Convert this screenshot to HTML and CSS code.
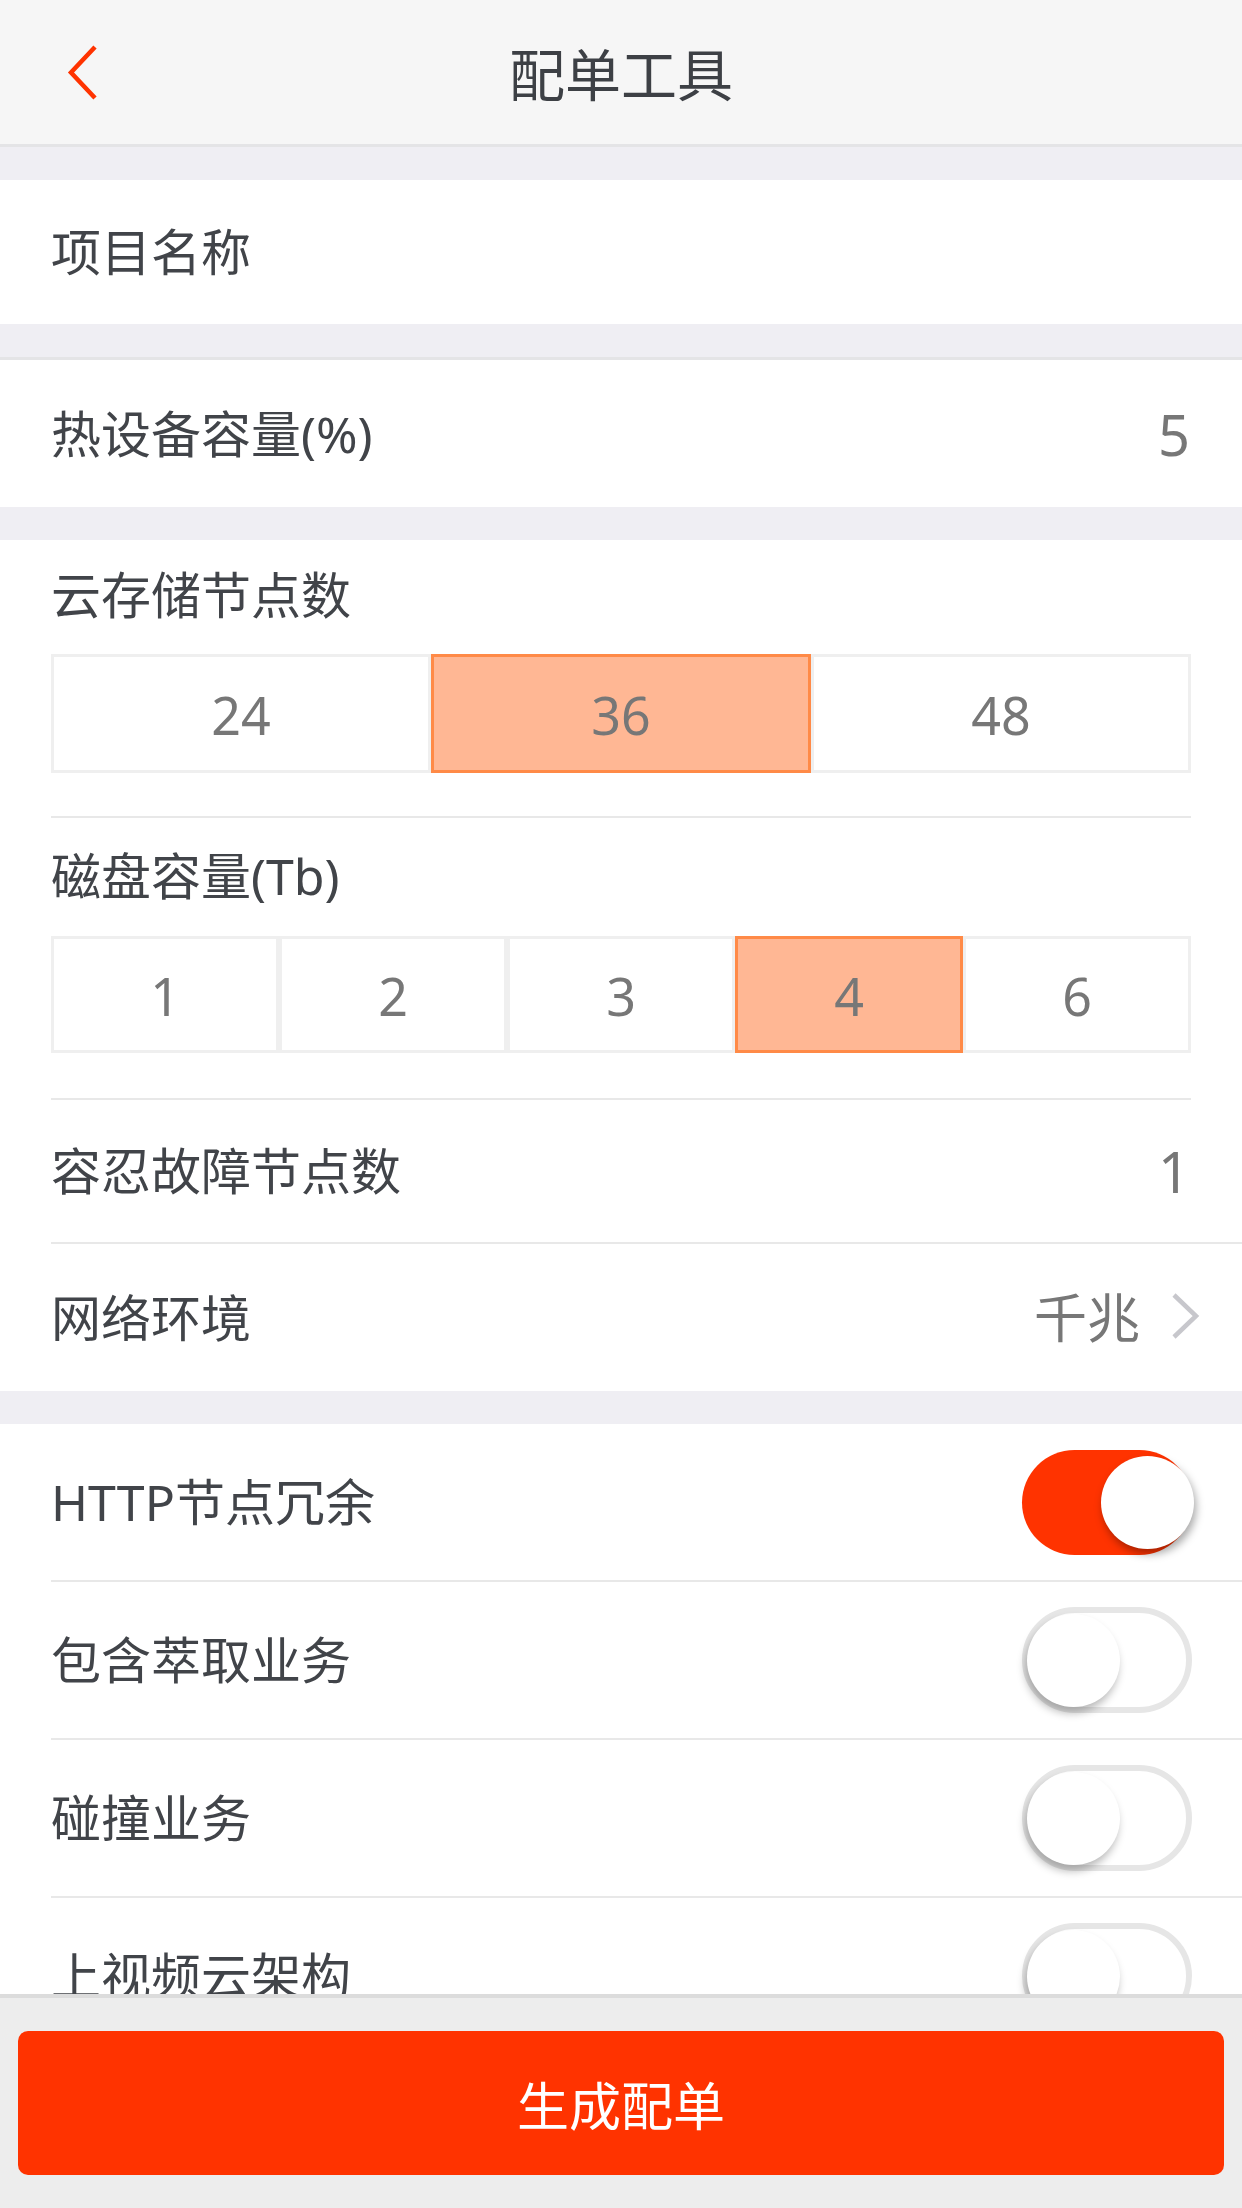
FILE: index.html
```html
<!DOCTYPE html>
<html lang="zh-CN">
<head>
<meta charset="utf-8">
<title>配单工具</title>
<link rel="stylesheet" href="styles.css">
</head>
<body>
<div class="app">
  <header class="nav">
    <div class="nav-left">
      <svg class="back" width="32" height="56" viewBox="0 0 32 56"><polyline points="28,2 4,27.5 28,53" fill="none" stroke="#ff3300" stroke-width="4.5"/></svg>
    </div>
    <h1 class="nav-title">配单工具</h1>
    <div class="nav-right"></div>
  </header>
  <main class="content">
    <div class="gap"></div>
    <section class="card">
      <div class="row row-name"><span class="label">项目名称</span></div>
    </section>
    <div class="gap gap-line"></div>
    <section class="card">
      <div class="row row-hot"><span class="label">热设备容量(%)</span><span class="value">5</span></div>
    </section>
    <div class="gap"></div>
    <section class="card">
      <div class="group">
        <div class="group-label label">云存储节点数</div>
        <div class="segs segs-3">
          <div class="seg">24</div>
          <div class="seg seg-on">36</div>
          <div class="seg">48</div>
        </div>
      </div>
      <div class="group group-2">
        <div class="group-label label">磁盘容量(Tb)</div>
        <div class="segs segs-5">
          <div class="seg">1</div>
          <div class="seg">2</div>
          <div class="seg">3</div>
          <div class="seg seg-on">4</div>
          <div class="seg">6</div>
        </div>
      </div>
      <div class="row row-fault"><span class="label">容忍故障节点数</span><span class="value">1</span></div>
      <div class="row row-net row-last">
        <span class="label">网络环境</span>
        <span class="value value-link">千兆<svg class="chev" width="30" height="48" viewBox="0 0 30 48"><polyline points="4,3 26,24 4,45" fill="none" stroke="#c7c7cc" stroke-width="4.5"/></svg></span>
      </div>
    </section>
    <div class="gap"></div>
    <section class="card">
      <div class="row row-sw"><span class="label">HTTP节点冗余</span><span class="toggle toggle-on"><span class="knob"></span></span></div>
      <div class="row row-sw"><span class="label">包含萃取业务</span><span class="toggle"><span class="knob"></span></span></div>
      <div class="row row-sw"><span class="label">碰撞业务</span><span class="toggle"><span class="knob"></span></span></div>
      <div class="row row-sw"><span class="label">上视频云架构</span><span class="toggle"><span class="knob"></span></span></div>
    </section>
  </main>
  <footer class="footer">
    <button class="submit">生成配单</button>
  </footer>
</div>
</body>
</html>
```

FILE: styles.css
```css
* { box-sizing: border-box; }
html, body {
  margin: 0;
  padding: 0;
  background: #efeef3;
}
body {
  font-family: "Noto Sans", "Noto Sans CJK SC", sans-serif;
  color: #414449;
}
.app {
  width: 1242px;
  height: 2208px;
  display: flex;
  flex-direction: column;
  overflow: hidden;
}
.nav {
  flex: 0 0 147px;
  background: #f6f6f6;
  border-bottom: 3px solid #e4e4e6;
  display: grid;
  grid-template-columns: 1fr auto 1fr;
  align-items: center;
}
.nav-left {
  padding-left: 67px;
  display: flex;
  align-items: center;
  padding-top: 2px;
}
.nav-title {
  margin: 0;
  font-weight: 400;
  font-size: 56px;
  line-height: 64px;
  color: #3d4045;
  padding-top: 4px;
}
.content {
  flex: 1;
  overflow: hidden;
  display: flex;
  flex-direction: column;
}
.gap {
  flex: 0 0 33px;
  background: #efeef3;
}
.gap-line {
  flex-basis: 36px;
  border-bottom: 3px solid #e4e4e6;
}
.card {
  background: #fff;
  flex: 0 0 auto;
}
.row {
  display: flex;
  align-items: center;
  justify-content: space-between;
  padding: 0 52px 0 0;
  margin-left: 51px;
}
.label {
  font-size: 50px;
  line-height: 60px;
  color: #414449;
}
.value {
  font-size: 56px;
  line-height: 60px;
  color: #777;
}
.row-name { height: 144px; }
.row-hot { height: 147px; }
.row-fault {
  height: 144px;
  border-bottom: 2px solid #e8e8e8;
}
.row-net { height: 147px; padding-right: 42px; }
.value-link {
  display: flex;
  align-items: center;
  gap: 30px;
  font-size: 53px;
}
.chev { display: block; margin-top: -4px; }
.group {
  margin: 0 51px;
  padding: 25px 0 43px;
  border-bottom: 2px solid #e8e8e8;
}
.group-2 { padding-top: 28px; padding-bottom: 45px; }
.group-label { height: 60px; }
.segs {
  display: grid;
  margin-top: 29px;
  height: 119px;
}
.group-2 .segs { margin-top: 30px; height: 117px; }
.segs-3 { grid-template-columns: repeat(3, 1fr); }
.segs-5 { grid-template-columns: repeat(5, 1fr); }
.seg {
  border: 3px solid #efefef;
  display: flex;
  align-items: center;
  justify-content: center;
  font-size: 52px;
  color: #777;
  background: #fff;
  padding-top: 2px;
}
.seg-on {
  border-color: #ff8a47;
  background: #ffb794;
}
.row-sw {
  height: 158px;
  border-bottom: 2px solid #e8e8e8;
  padding-right: 50px;
}
.toggle {
  width: 170px;
  height: 106px;
  border-radius: 53px;
  border: 6px solid #e6e6e6;
  background: #fff;
  display: flex;
  align-items: center;
  justify-content: flex-start;
}
.toggle .knob {
  width: 93px;
  height: 93px;
  border-radius: 50%;
  background: #fff;
  margin-left: -1px;
  box-shadow: -2px 6px 9px rgba(0, 0, 0, 0.28);
}
.toggle-on {
  border: none;
  background: #ff3300;
  justify-content: flex-end;
  height: 105px;
}
.toggle-on .knob {
  margin-left: 0;
  margin-right: -2px;
  box-shadow: 2px 5px 9px rgba(0, 0, 0, 0.35);
}
.footer {
  flex: 0 0 214px;
  background: #ededed;
  border-top: 4px solid #dcdcdc;
  padding: 33px 18px;
}
.submit {
  width: 100%;
  height: 144px;
  border: none;
  border-radius: 10px;
  background: #ff3300;
  color: #fff;
  font-family: "Noto Sans", "Noto Sans CJK SC", sans-serif;
  font-size: 52px;
  padding: 0;
}
```
